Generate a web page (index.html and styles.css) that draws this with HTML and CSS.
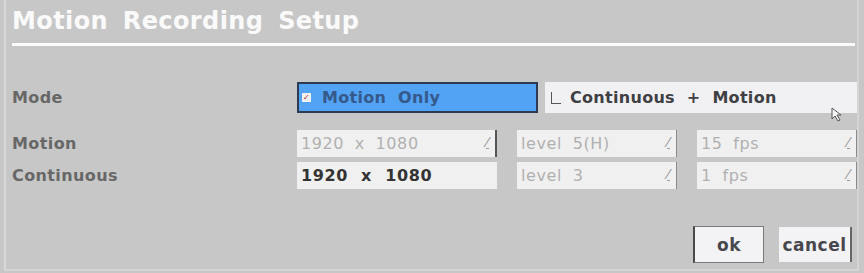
FILE: index.html
```html
<!DOCTYPE html>
<html>
<head>
    <title>Motion Recording Setup</title>
    <link rel="stylesheet" href="styles.css">
</head>
<body>
    <div class="panel">
        <h1 class="title">Motion Recording Setup</h1>
        <div class="rule"></div>

        <div class="row mode-row">
            <div class="label">Mode</div>
            <div class="opt opt-on"><span class="check on">&#10003;</span>Motion Only</div>
            <div class="opt opt-off"><span class="check off"></span>Continuous + Motion</div>
        </div>

        <div class="row field-row first">
            <div class="label">Motion</div>
            <div class="sel wide disabled edge">1920 x 1080<span class="arrow">&#8260;</span></div>
            <div class="sel mid disabled">level 5(H)<span class="arrow">&#8260;</span></div>
            <div class="sel mid disabled">15 fps<span class="arrow">&#8260;</span></div>
        </div>

        <div class="row field-row">
            <div class="label">Continuous</div>
            <div class="sel wide active">1920 x 1080</div>
            <div class="sel mid disabled">level 3<span class="arrow">&#8260;</span></div>
            <div class="sel mid disabled">1 fps<span class="arrow">&#8260;</span></div>
        </div>

        <div class="buttons">
            <div class="btn ok">ok</div>
            <div class="btn cancel">cancel</div>
        </div>

        <svg class="cursor" width="14" height="16" viewBox="0 0 14 16">
            <path d="M1 1 L1 12 L4 9 L7 14 L9 13 L6 8 L10 8 Z" fill="#f4f4f4" stroke="#555" stroke-width="1"/>
        </svg>
    </div>
</body>
</html>
```

FILE: styles.css
```css
body {
    margin: 0;
    background: #c7c7c7;
    font-family: "DejaVu Sans", Verdana, sans-serif;
    width: 864px;
    height: 273px;
    overflow: hidden;
}
.panel {
    position: relative;
    margin-left: 4px;
    width: 855px;
    height: 271px;
    border-left: 2px solid #d8d8d8;
    border-right: 2px solid #d4d4d4;
    border-bottom: 2px solid #d4d4d4;
    box-sizing: border-box;
}
.title {
    margin: 0;
    padding: 7px 0 0 6px;
    height: 36px;
    color: #fafafa;
    font-size: 24px;
    font-weight: bold;
    word-spacing: 6px;
    letter-spacing: 0.4px;
}
.rule {
    margin-left: 6px;
    width: 843px;
    height: 3px;
    background: #fbfbfb;
}
.row {
    display: flex;
    align-items: center;
}
.label {
    width: 291px;
    flex: none;
    padding-left: 6px;
    box-sizing: border-box;
    color: #676767;
    font-size: 16px;
    font-weight: bold;
    letter-spacing: 0.4px;
}
.mode-row {
    margin-top: 36px;
    height: 31px;
}
.opt {
    height: 31px;
    box-sizing: border-box;
    display: flex;
    align-items: center;
    font-size: 16px;
    font-weight: bold;
    word-spacing: 6px;
    letter-spacing: 0.3px;
}
.opt-on {
    width: 241px;
    background: #52a3f3;
    border: 2px solid #2c3b52;
    color: #36598c;
    padding-left: 3px;
}
.opt-off {
    width: 312px;
    margin-left: 7px;
    background: #f1f1f3;
    color: #3f3f44;
    padding-left: 4px;
}
.check {
    display: inline-block;
    width: 9px;
    height: 9px;
    margin-right: 11px;
    box-sizing: border-box;
    font-size: 8px;
    line-height: 9px;
    text-align: center;
}
.check.on {
    background: #f2f2f2;
    color: #b03030;
}
.check.off {
    width: 10px;
    height: 12px;
    border-left: 1px solid #555;
    border-bottom: 1px solid #555;
    margin-left: 2px;
    margin-right: 9px;
}
.field-row {
    height: 27px;
    margin-top: 5px;
}
.field-row.first {
    margin-top: 17px;
}
.sel {
    position: relative;
    flex: none;
    height: 27px;
    box-sizing: border-box;
    background: #f0f0f0;
    display: flex;
    align-items: center;
    padding-left: 4px;
    font-size: 16px;
    word-spacing: 5px;
    letter-spacing: 0.6px;
}
.wide {
    width: 200px;
}
.mid {
    width: 160px;
    margin-left: 20px;
}
.disabled {
    color: #b0b0b0;
    border-right: 1px solid #8a8a8a;
}
.edge {
    border-right: 2px solid #555;
}
.active {
    color: #333;
    font-weight: bold;
    word-spacing: 7px;
}
.arrow {
    position: absolute;
    right: 6px;
    top: 4px;
    color: #999;
    font-size: 14px;
    text-decoration: underline;
}
.buttons {
    display: flex;
    justify-content: flex-end;
    align-items: center;
    margin-top: 37px;
    padding-right: 5px;
}
.btn {
    height: 35px;
    box-sizing: border-box;
    background: #f3f3f5;
    color: #47474d;
    font-size: 17px;
    font-weight: bold;
    letter-spacing: 0.5px;
    display: flex;
    align-items: center;
    justify-content: center;
}
.ok {
    width: 71px;
    height: 37px;
    border: 1px solid #7a7a7a;
    border-left: 2px solid #4a4a4a;
}
.cancel {
    width: 73px;
    margin-left: 15px;
    border-right: 2px solid #666;
}
.cursor {
    position: absolute;
    left: 825px;
    top: 107px;
}
```
